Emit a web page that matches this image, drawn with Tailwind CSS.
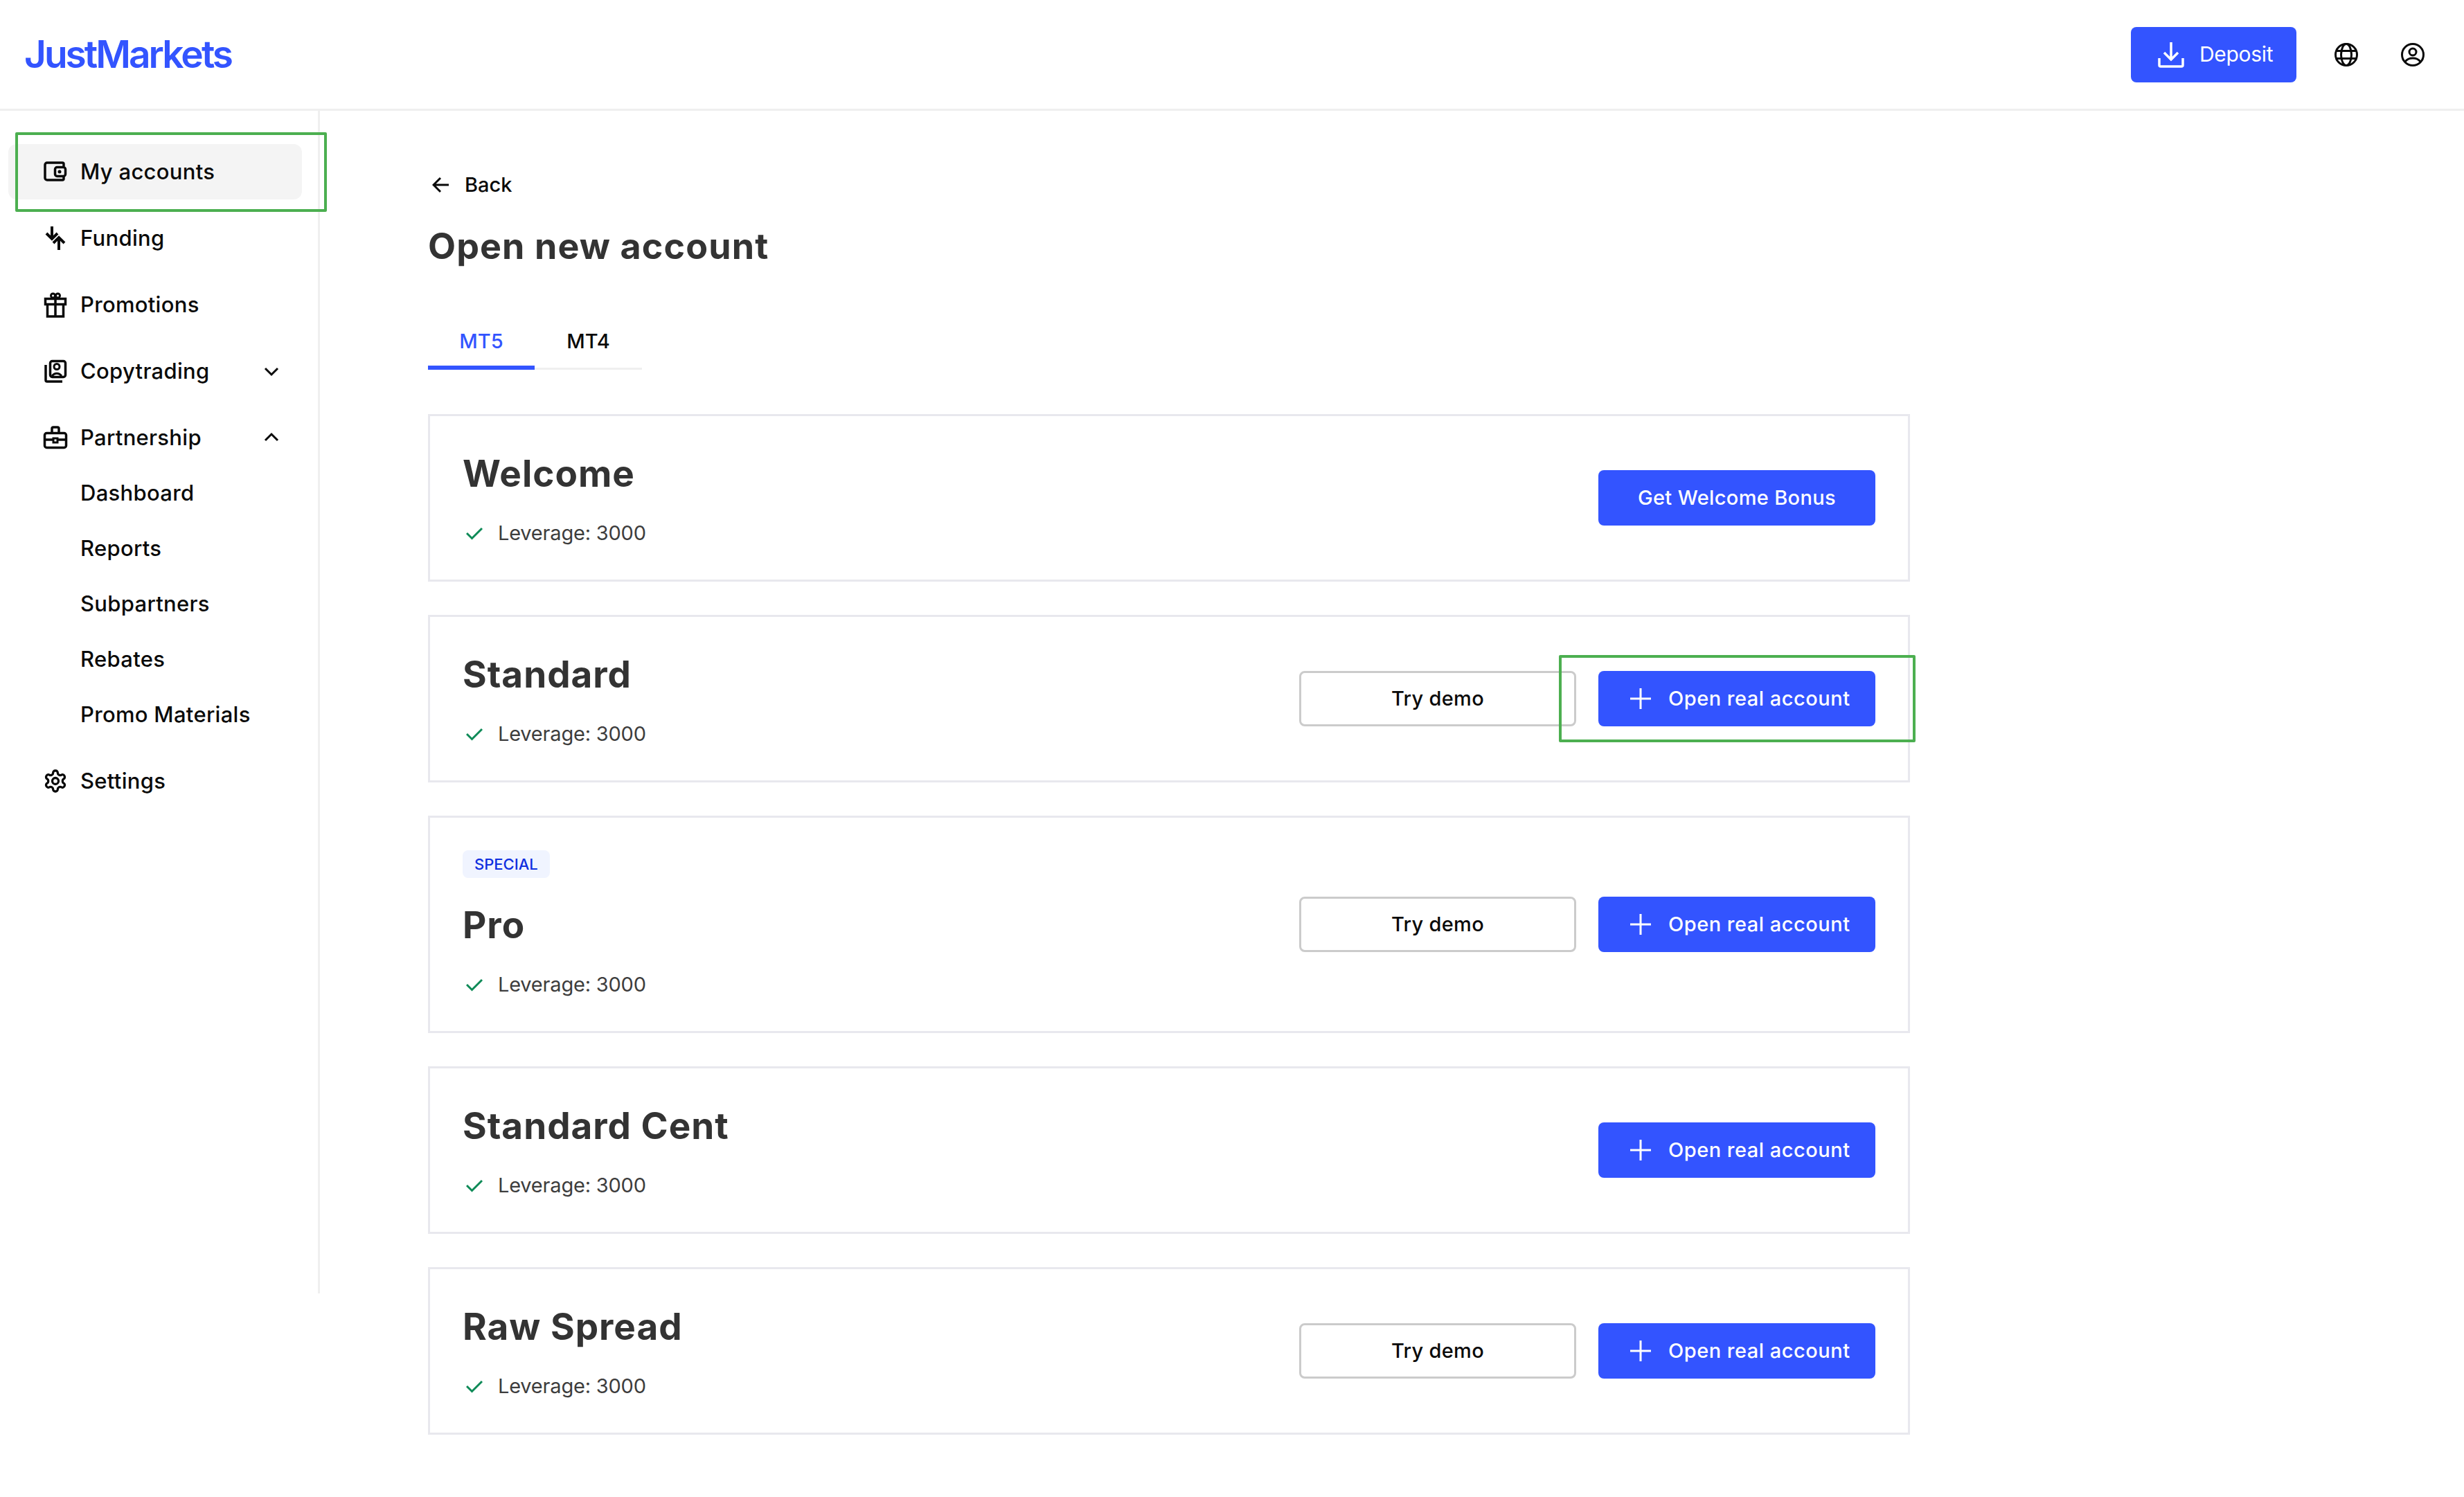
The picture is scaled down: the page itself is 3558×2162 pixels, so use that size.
<!DOCTYPE html>
<html lang="en">
<head>
<meta charset="UTF-8" />
<title>Open new account</title>
<script src="https://cdn.jsdelivr.net/npm/@tailwindcss/browser@4"></script>
</head>
<body class="bg-white font-['Inter',sans-serif] text-[#0a0a0a]">
<div class="relative w-[3558px] h-[2162px] overflow-hidden">
    <!-- Header -->
    <header class="flex items-center h-[160px] border-b-[3px] border-[#efefef] pl-[35px]">
        <div class="text-[55px] font-semibold tracking-[-3px] text-[#3354ff] leading-none">JustMarkets</div>
        <div class="ml-auto flex items-center">
            <button class="flex items-center h-[80px] w-[239px] pl-[39px] rounded-[8px] bg-[#3354ff] text-white text-[30px] tracking-[-0.3px] gap-[22px]">
                <svg class="w-[38px] h-[38px]" viewBox="0 0 38 38" fill="none" stroke="currentColor" stroke-width="3.5"><path d="M19 1v25M9 16l10 10 10-10" /><path d="M2 24v10a2 2 0 0 0 2 2h30a2 2 0 0 0 2-2V24" /></svg>
                <span>Deposit</span>
            </button>
            <svg class="ml-[54px] w-[36px] h-[36px]" viewBox="0 0 36 36" fill="none" stroke="#0a0a0a" stroke-width="3"><circle cx="18" cy="18" r="15.5" /><ellipse cx="18" cy="18" rx="7.5" ry="15.5" /><path d="M3.5 12.5h29M3.5 23.5h29" /></svg>
            <svg class="ml-[60px] mr-[56px] w-[36px] h-[36px]" viewBox="0 0 36 36" fill="none" stroke="#0a0a0a" stroke-width="3"><circle cx="18" cy="18" r="15.5" /><circle cx="18" cy="14" r="5" /><path d="M7 28c3-4 7-5 11-5s8 1 11 5" /></svg>
        </div>
    </header>

    <div class="flex items-start">
        <!-- Sidebar -->
        <aside class="w-[462px] h-[1708px] shrink-0 border-r-[3px] border-[#efefef] pt-[48px] pl-[12px] pr-[23px] text-[31px] font-medium tracking-[0.3px]">
            <nav class="flex flex-col gap-[16px]">
                <a class="flex items-center h-[80px] pl-[50px] gap-[18px] rounded-[12px] bg-[#f4f4f4]">
                    <svg class="w-[36px] h-[36px]" viewBox="0 0 36 36" fill="none" stroke="currentColor" stroke-width="3.500"><path d="M30 10V7a2 2 0 0 0-2-2H6a3 3 0 0 0-3 3v19a3 3 0 0 0 3 3h22a2 2 0 0 0 2-2v-3" /><rect x="17.500" y="11.500" width="15" height="13" rx="3" /><circle cx="24" cy="18" r="2.500" fill="currentColor" stroke="none" /></svg>
                    My accounts
                </a>
                <a class="flex items-center h-[80px] pl-[50px] gap-[18px]">
                    <svg class="w-[36px] h-[36px]" viewBox="0 0 36 36" fill="none" stroke="currentColor" stroke-width="4"><path d="M13 1v18M5 11l8 8 8-8" /><path d="M23 35V17M15 25l8-8 8 8" /></svg>
                    Funding
                </a>
                <a class="flex items-center h-[80px] pl-[50px] gap-[18px]">
                    <svg class="w-[36px] h-[36px] overflow-visible" viewBox="0 0 36 36" fill="none" stroke="currentColor" stroke-width="3.500"><path d="M3.500 9.500h29v8h-29zM6.500 17.500v17.500h23V17.500M18 9v26" /><circle cx="14.500" cy="5" r="3" stroke-width="3" /><circle cx="21.500" cy="5" r="3" stroke-width="3" /></svg>
                    Promotions
                </a>
                <a class="flex items-center h-[80px] pl-[50px] gap-[18px]">
                    <svg class="w-[36px] h-[36px]" viewBox="0 0 36 36" fill="none" stroke="currentColor" stroke-width="3.500"><rect x="10.500" y="3.500" width="22" height="23" rx="3" /><path d="M4 9v22a2 2 0 0 0 2 2h22" /><circle cx="20" cy="11.500" r="4" stroke-width="3" /><path d="M13 25c4-5 10-5 14 0" stroke-width="3" /></svg>
                    Copytrading
                    <svg class="ml-auto mr-[32px] w-[24px] h-[24px]" viewBox="0 0 24 24" fill="none" stroke="currentColor" stroke-width="3"><path d="M3 8l9 9 9-9" /></svg>
                </a>
                <div>
                    <a class="flex items-center h-[80px] pl-[50px] gap-[18px]">
                        <svg class="w-[36px] h-[36px]" viewBox="0 0 36 36" fill="none" stroke="currentColor" stroke-width="3.500"><rect x="2.500" y="11.500" width="31" height="21" rx="3" /><path d="M13 11V5a2 2 0 0 1 2-2h6a2 2 0 0 1 2 2v6M2.500 21H15M21 21h12.500" /><rect x="15" y="19" width="6" height="6" stroke-width="3" /></svg>
                        Partnership
                        <svg class="ml-auto mr-[32px] w-[24px] h-[24px]" viewBox="0 0 24 24" fill="none" stroke="currentColor" stroke-width="3"><path d="M3 16l9-9 9 9" /></svg>
                    </a>
                    <a class="flex items-center h-[80px] pl-[104px]">Dashboard</a>
                    <a class="flex items-center h-[80px] pl-[104px]">Reports</a>
                    <a class="flex items-center h-[80px] pl-[104px]">Subpartners</a>
                    <a class="flex items-center h-[80px] pl-[104px]">Rebates</a>
                    <a class="flex items-center h-[80px] pl-[104px]">Promo Materials</a>
                </div>
                <a class="flex items-center h-[80px] pl-[50px] gap-[18px]">
                    <svg class="w-[36px] h-[36px]" viewBox="0 0 24 24" fill="none" stroke="currentColor" stroke-width="2.200"><path d="M12.220 2h-.44a2 2 0 0 0-2 2v.18a2 2 0 0 1-1 1.730l-.43.25a2 2 0 0 1-2 0l-.15-.08a2 2 0 0 0-2.730.73l-.22.38a2 2 0 0 0 .73 2.730l.15.1a2 2 0 0 1 1 1.720v.51a2 2 0 0 1-1 1.740l-.15.09a2 2 0 0 0-.73 2.730l.22.38a2 2 0 0 0 2.730.73l.15-.08a2 2 0 0 1 2 0l.43.25a2 2 0 0 1 1 1.730V20a2 2 0 0 0 2 2h.44a2 2 0 0 0 2-2v-.18a2 2 0 0 1 1-1.730l.43-.25a2 2 0 0 1 2 0l.15.08a2 2 0 0 0 2.730-.73l.22-.39a2 2 0 0 0-.73-2.730l-.15-.08a2 2 0 0 1-1-1.740v-.5a2 2 0 0 1 1-1.740l.15-.09a2 2 0 0 0 .73-2.730l-.22-.38a2 2 0 0 0-2.730-.73l-.15.08a2 2 0 0 1-2 0l-.43-.25a2 2 0 0 1-1-1.730V4a2 2 0 0 0-2-2z" /><circle cx="12" cy="12" r="3" /></svg>
                    Settings
                </a>
            </nav>
        </aside>

        <!-- Main -->
        <main class="pl-[156px] pt-[83px] w-[2296px]">
            <a class="flex items-center h-[48px] gap-[23px] pl-[6px] text-[29px] font-medium">
                <svg class="w-[24px] h-[24px]" viewBox="0 0 24 24" fill="none" stroke="currentColor" stroke-width="3"><path d="M24 12H2M12 2L2 12l10 10" /></svg>
                Back
            </a>
            <h1 class="mt-[29px] h-[72px] leading-[72px] text-[52px] font-bold tracking-[1.1px] text-[#333333]">Open new account</h1>
            <div class="mt-[60px] flex w-[309px] h-[82px] border-b-[3px] border-[#efefef] text-[29px] font-medium">
                <div class="w-[154px] h-[82px] pt-[6px] flex items-center justify-center text-[#3354ff] border-b-[6px] border-[#3354ff]">MT5</div>
                <div class="w-[155px] h-[82px] pt-[3px] flex items-center justify-center border-b-[3px] border-transparent">MT4</div>
            </div>

            <div class="mt-[64px] flex flex-col gap-[48px] w-[2140px]">
                <!-- Welcome -->
                <section class="flex items-center justify-between border-[3px] border-[#e8e8ee] p-[47px]">
                    <div>
                        <h2 class="h-[72px] leading-[72px] text-[53px] font-bold tracking-[1px] text-[#333333]">Welcome</h2>
                        <div class="mt-[30px] flex items-center h-[40px] gap-[22px] pl-[5px] text-[29px] tracking-[-0.2px] text-[#3d3d3d]">
                            <svg class="w-[24px] h-[20px]" viewBox="0 0 24 20" fill="none" stroke="#0e8a57" stroke-width="3"><path d="M1 10l7.500 7.500L23 3" /></svg>
                            Leverage: 3000
                        </div>
                    </div>
                    <button class="h-[80px] w-[400px] rounded-[8px] bg-[#3354ff] text-white text-[29px] font-medium tracking-[0.35px]">Get Welcome Bonus</button>
                </section>

                <!-- Standard -->
                <section class="flex items-center border-[3px] border-[#e8e8ee] p-[47px]">
                    <div>
                        <h2 class="h-[72px] leading-[72px] text-[53px] font-bold tracking-[1px] text-[#333333]">Standard</h2>
                        <div class="mt-[30px] flex items-center h-[40px] gap-[22px] pl-[5px] text-[29px] tracking-[-0.2px] text-[#3d3d3d]">
                            <svg class="w-[24px] h-[20px]" viewBox="0 0 24 20" fill="none" stroke="#0e8a57" stroke-width="3"><path d="M1 10l7.500 7.500L23 3" /></svg>
                            Leverage: 3000
                        </div>
                    </div>
                    <div class="ml-auto flex gap-[32px]">
                        <button class="h-[80px] w-[400px] rounded-[8px] border-[3px] border-[#cbcbcb] text-[29px] font-medium tracking-[0.3px]">Try demo</button>
                        <button class="flex items-center h-[80px] w-[400px] pl-[46px] gap-[25px] rounded-[8px] bg-[#3354ff] text-white text-[29px] font-medium tracking-[0.5px]">
                            <svg class="w-[30px] h-[30px]" viewBox="0 0 30 30" fill="none" stroke="currentColor" stroke-width="3"><path d="M15 0v30M0 15h30" /></svg>
                            Open real account
                        </button>
                    </div>
                </section>

                <!-- Pro -->
                <section class="flex items-center border-[3px] border-[#e8e8ee] p-[47px]">
                    <div>
                        <div class="inline-flex items-center h-[40px] px-[17px] rounded-[8px] bg-[#f0f4ff] text-[22px] font-medium text-[#0f2fe0] align-top">SPECIAL</div>
                        <h2 class="mt-[32px] h-[72px] leading-[72px] text-[53px] font-bold tracking-[1px] text-[#333333]">Pro</h2>
                        <div class="mt-[30px] flex items-center h-[40px] gap-[22px] pl-[5px] text-[29px] tracking-[-0.2px] text-[#3d3d3d]">
                            <svg class="w-[24px] h-[20px]" viewBox="0 0 24 20" fill="none" stroke="#0e8a57" stroke-width="3"><path d="M1 10l7.500 7.500L23 3" /></svg>
                            Leverage: 3000
                        </div>
                    </div>
                    <div class="ml-auto flex gap-[32px]">
                        <button class="h-[80px] w-[400px] rounded-[8px] border-[3px] border-[#cbcbcb] text-[29px] font-medium tracking-[0.3px]">Try demo</button>
                        <button class="flex items-center h-[80px] w-[400px] pl-[46px] gap-[25px] rounded-[8px] bg-[#3354ff] text-white text-[29px] font-medium tracking-[0.5px]">
                            <svg class="w-[30px] h-[30px]" viewBox="0 0 30 30" fill="none" stroke="currentColor" stroke-width="3"><path d="M15 0v30M0 15h30" /></svg>
                            Open real account
                        </button>
                    </div>
                </section>

                <!-- Standard Cent -->
                <section class="flex items-center border-[3px] border-[#e8e8ee] p-[47px]">
                    <div>
                        <h2 class="h-[72px] leading-[72px] text-[53px] font-bold tracking-[1px] text-[#333333]">Standard Cent</h2>
                        <div class="mt-[30px] flex items-center h-[40px] gap-[22px] pl-[5px] text-[29px] tracking-[-0.2px] text-[#3d3d3d]">
                            <svg class="w-[24px] h-[20px]" viewBox="0 0 24 20" fill="none" stroke="#0e8a57" stroke-width="3"><path d="M1 10l7.500 7.500L23 3" /></svg>
                            Leverage: 3000
                        </div>
                    </div>
                    <button class="ml-auto flex items-center h-[80px] w-[400px] pl-[46px] gap-[25px] rounded-[8px] bg-[#3354ff] text-white text-[29px] font-medium tracking-[0.5px]">
                        <svg class="w-[30px] h-[30px]" viewBox="0 0 30 30" fill="none" stroke="currentColor" stroke-width="3"><path d="M15 0v30M0 15h30" /></svg>
                        Open real account
                    </button>
                </section>

                <!-- Raw Spread -->
                <section class="flex items-center border-[3px] border-[#e8e8ee] p-[47px]">
                    <div>
                        <h2 class="h-[72px] leading-[72px] text-[53px] font-bold tracking-[1px] text-[#333333]">Raw Spread</h2>
                        <div class="mt-[30px] flex items-center h-[40px] gap-[22px] pl-[5px] text-[29px] tracking-[-0.2px] text-[#3d3d3d]">
                            <svg class="w-[24px] h-[20px]" viewBox="0 0 24 20" fill="none" stroke="#0e8a57" stroke-width="3"><path d="M1 10l7.500 7.500L23 3" /></svg>
                            Leverage: 3000
                        </div>
                    </div>
                    <div class="ml-auto flex gap-[32px]">
                        <button class="h-[80px] w-[400px] rounded-[8px] border-[3px] border-[#cbcbcb] text-[29px] font-medium tracking-[0.3px]">Try demo</button>
                        <button class="flex items-center h-[80px] w-[400px] pl-[46px] gap-[25px] rounded-[8px] bg-[#3354ff] text-white text-[29px] font-medium tracking-[0.5px]">
                            <svg class="w-[30px] h-[30px]" viewBox="0 0 30 30" fill="none" stroke="currentColor" stroke-width="3"><path d="M15 0v30M0 15h30" /></svg>
                            Open real account
                        </button>
                    </div>
                </section>
            </div>
        </main>
    </div>

    <!-- Green highlight frames drawn over the page -->
    <div class="absolute left-[22px] top-[191px] w-[450px] h-[115px] border-[4px] border-[#4caf50] rounded-[2px]"></div>
    <div class="absolute left-[2251px] top-[946px] w-[515px] h-[126px] border-[4px] border-[#4caf50] rounded-[2px]"></div>
</div>
</body>
</html>
